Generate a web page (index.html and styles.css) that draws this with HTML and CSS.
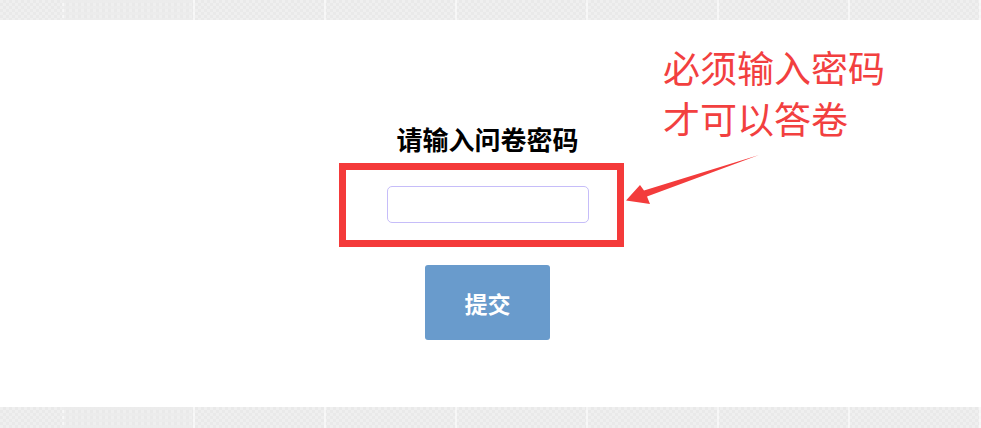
FILE: index.html
```html
<!DOCTYPE html>
<html lang="zh-CN">
<head>
<meta charset="utf-8">
<title>问卷密码</title>
<link rel="stylesheet" href="styles.css">
</head>
<body>
<div class="band"></div>
<main class="stage">
  <form class="form">
    <h2 class="title">请输入问卷密码</h2>
    <input class="pwd" type="password">
    <button class="submit" type="button">提交</button>
  </form>
  <div class="mark-box"></div>
  <div class="note">必须输入密码<br>才可以答卷</div>
  <svg class="arrow" width="981" height="387" viewBox="0 20 981 387">
    <polygon points="759,155 647,196.5 650,204 626,200.5 640,185 644,190.5" fill="#f33c3c"/>
  </svg>
</main>
<div class="band"></div>
</body>
</html>
```
FILE: styles.css
```css
html, body {
  margin: 0;
  padding: 0;
  background: #ffffff;
}
body {
  font-family: "Noto Sans CJK SC", "Noto Sans", sans-serif;
  width: 981px;
  height: 428px;
  overflow: hidden;
}
.band {
  height: 20px;
  background-color: #ececec;
  background-image:
    repeating-linear-gradient(0deg, transparent 0 3px, rgba(236,236,236,0.9) 3px 6px),
    repeating-linear-gradient(90deg, transparent 0 62px, rgba(255,255,255,0.55) 62px 64px, transparent 64px 131px),
    repeating-conic-gradient(#e9e9e9 0 25%, #efefef 0 50%);
  background-size: 131px 6px, 131px 100%, 6px 6px;
  background-position: 62px 0, 0 0, 0 0;
  background-repeat: repeat-y, repeat, repeat;
}
.band:last-child {
  height: 21px;
}
.stage {
  position: relative;
  height: 387px;
}
.form {
  margin: 0;
  padding: 104px 6px 0 0;
  display: flex;
  flex-direction: column;
  align-items: center;
}
.title {
  margin: 0;
  font-size: 26px;
  line-height: 30px;
  font-weight: 700;
  color: #000;
}
.pwd {
  box-sizing: border-box;
  margin-top: 32px;
  width: 202px;
  height: 37px;
  border: 1px solid #c6bdf9;
  border-radius: 5px;
  outline: none;
  background: #fff;
}
.submit {
  margin-top: 42px;
  width: 125px;
  height: 75px;
  border: none;
  border-radius: 3px;
  background: #699bcc;
  color: #fff;
  font-family: "Noto Sans CJK SC", sans-serif;
  font-size: 23px;
  font-weight: 700;
}
.mark-box {
  position: absolute;
  left: 339px;
  top: 143px;
  width: 271px;
  height: 70px;
  border: 7px solid #f43a3a;
}
.note {
  position: absolute;
  left: 663px;
  top: 22px;
  font-size: 37px;
  line-height: 51px;
  color: #f2403f;
  white-space: nowrap;
}
.arrow {
  position: absolute;
  left: 0;
  top: 0;
  pointer-events: none;
}
```
